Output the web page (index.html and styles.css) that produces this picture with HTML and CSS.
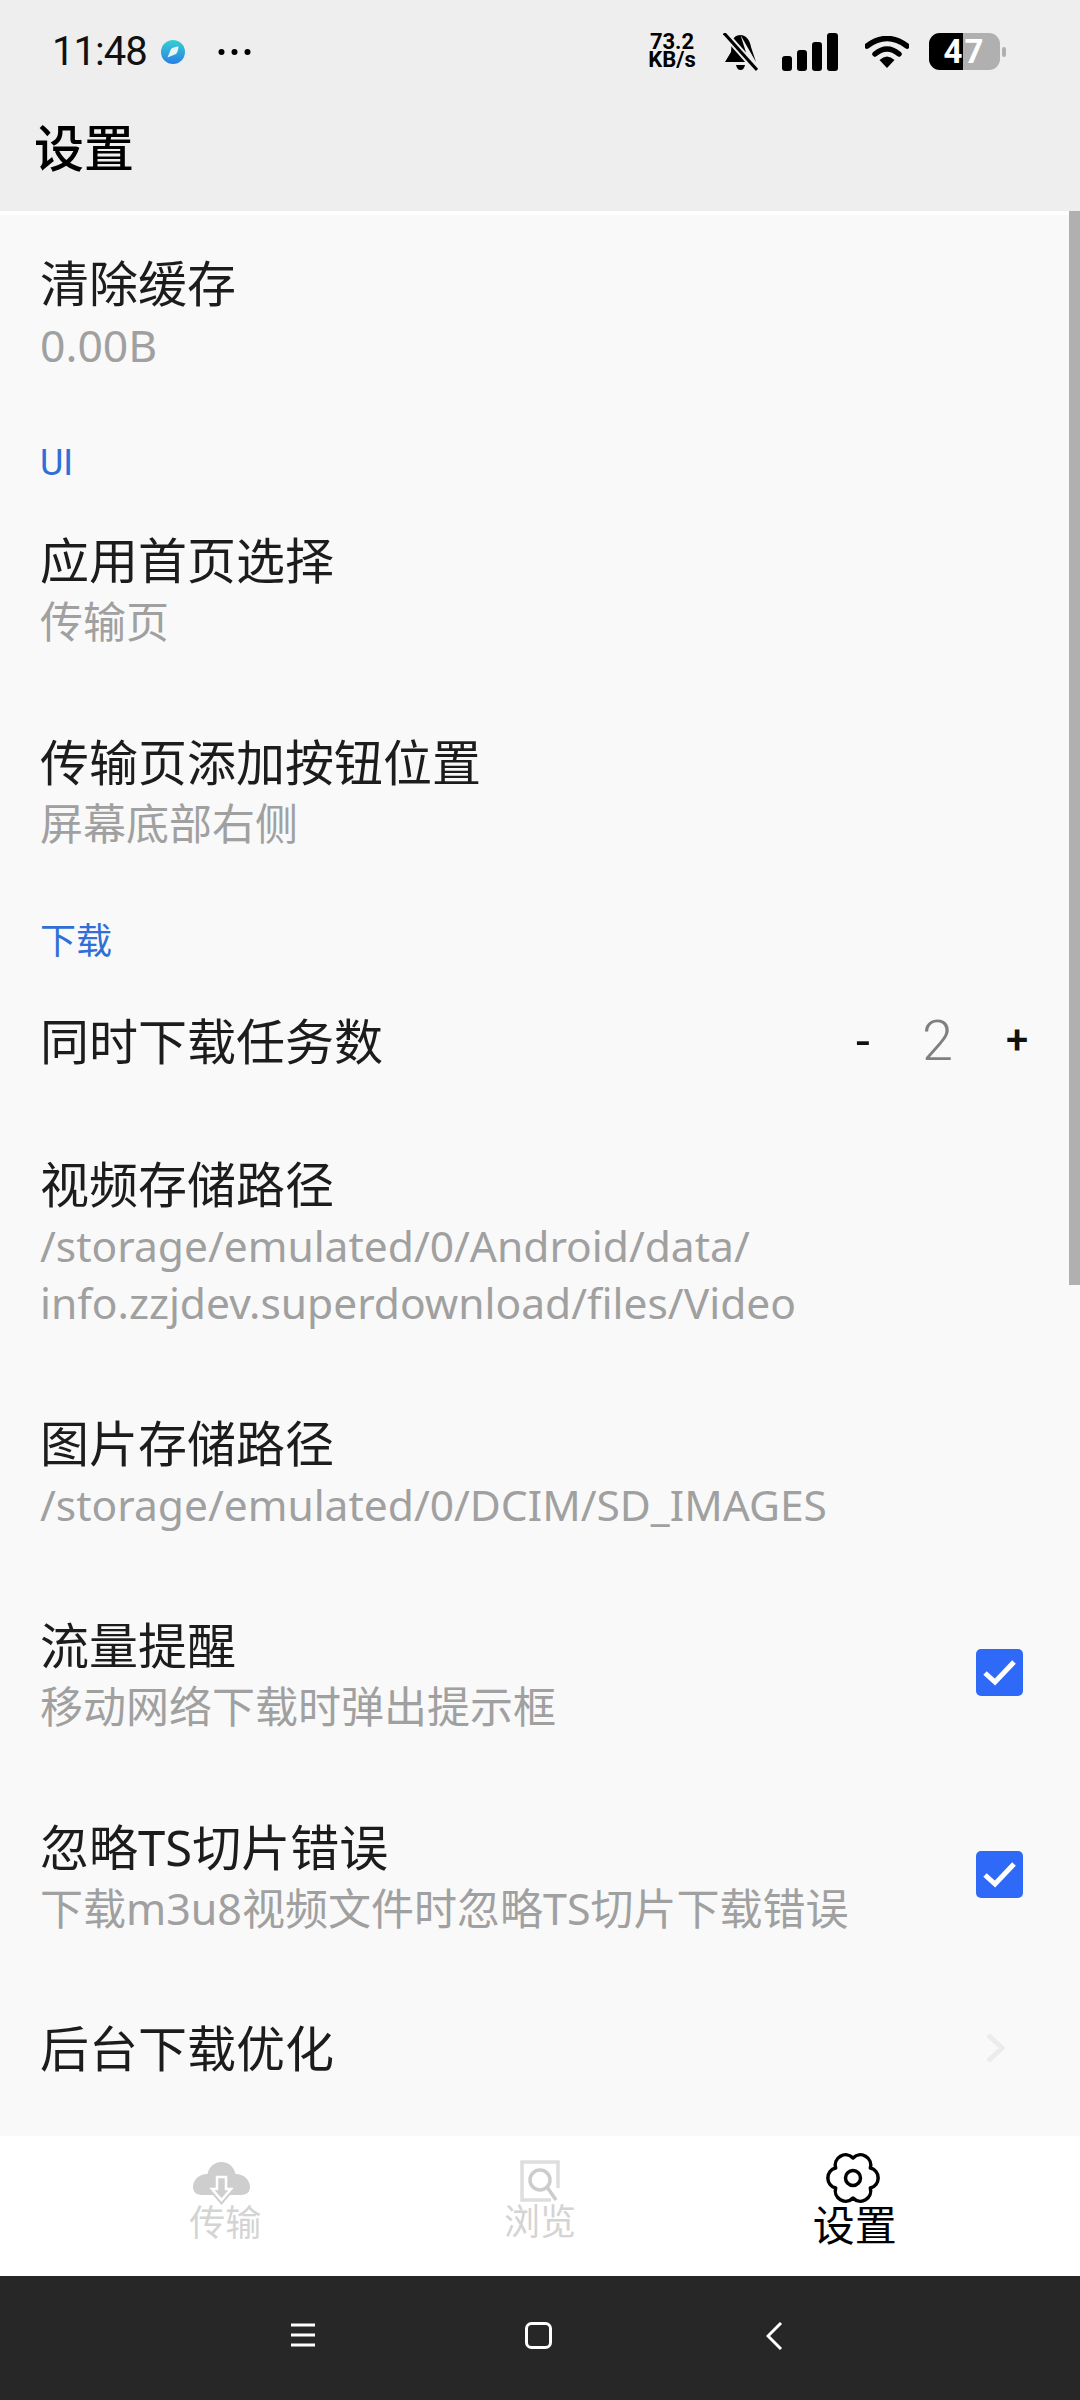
FILE: index.html
```html
<!DOCTYPE html>
<html lang="en">
<head>
  <meta charset="UTF-8" />
  <meta name="viewport" content="width=device-width, initial-scale=1.0" />
  <title>设置</title>
  <link rel="stylesheet" href="styles.css">
</head>
<body>
  <header class="top">
    <div class="status">
      <div class="status-left">
        <span class="time">11:48</span>
        <svg class="app-dot" viewBox="0 0 24 24">
          <defs>
            <linearGradient id="dotFill" x1="0" y1="0" x2="0" y2="1">
              <stop offset="0" stop-color="#35d0cf" />
              <stop offset="1" stop-color="#2a7fe6" />
            </linearGradient>
          </defs>
          <circle cx="12" cy="12" r="12" fill="url(#dotFill)" />
          <path d="M6.500 17.500 L10 9 Q12 7 17.500 6.500 Q17 12 15 14 Z" fill="#e4f6fb" />
        </svg>
        <svg class="more" viewBox="0 0 33 8">
          <circle cx="3.500" cy="4" r="3" />
          <circle cx="16.500" cy="4" r="3" />
          <circle cx="29.500" cy="4" r="3" />
        </svg>
      </div>
      <div class="status-right">
        <div class="speed">73.2<br>KB/s</div>
        <svg class="bell" viewBox="0 0 35 38">
          <path d="M17.500 2 C12 2 9 6 8.500 11 L8 19 L2 29 H26 Z M33 29 L28 14 C27 7 23 2 17.500 2 Z" />
          <path d="M13 32 H22 Q21 37 17.500 37 Q14 37 13 32 Z" />
          <path d="M2 1 L33 36" stroke="#eeeeee" stroke-width="7" />
          <path d="M1 0 L34 37" stroke="#000" stroke-width="3" />
        </svg>
        <div class="signal">
          <i class="bar bar-1"></i>
          <i class="bar bar-2"></i>
          <i class="bar bar-3"></i>
          <i class="bar bar-4"></i>
        </div>
        <svg class="wifi" viewBox="0 0 44 32">
          <path d="M2 10 Q22 -5 42 10" fill="none" stroke="#000" stroke-width="5.500" stroke-linecap="round" />
          <path d="M10 18 Q22 8 34 18" fill="none" stroke="#000" stroke-width="5.500" stroke-linecap="round" />
          <path d="M14.500 24 Q22 17 29.500 24 L22 32 Z" />
        </svg>
        <div class="battery">
          <div class="battery-body">
            <span class="battery-fill"></span>
            <span class="battery-text">47</span>
          </div>
          <span class="battery-nub"></span>
        </div>
      </div>
    </div>
    <h1 class="page-title">设置</h1>
  </header>

  <main class="list">
    <div class="scroll-thumb"></div>

    <div class="item">
      <div class="item-title">清除缓存</div>
      <div class="item-sub item-size">0.00B</div>
    </div>

    <div class="section">UI</div>

    <div class="item">
      <div class="item-title">应用首页选择</div>
      <div class="item-sub">传输页</div>
    </div>
    <div class="item">
      <div class="item-title">传输页添加按钮位置</div>
      <div class="item-sub">屏幕底部右侧</div>
    </div>

    <div class="section">下载</div>

    <div class="item item-row item-stepper">
      <div class="item-title">同时下载任务数</div>
      <div class="stepper">
        <span class="step-btn step-minus">-</span>
        <span class="step-value">2</span>
        <span class="step-btn">+</span>
      </div>
    </div>

    <div class="item">
      <div class="item-title">视频存储路径</div>
      <div class="item-sub item-path">/storage/emulated/0/Android/data/<br>info.zzjdev.superdownload/files/Video</div>
    </div>
    <div class="item">
      <div class="item-title">图片存储路径</div>
      <div class="item-sub item-path">/storage/emulated/0/DCIM/SD_IMAGES</div>
    </div>

    <div class="item item-row">
      <div>
        <div class="item-title">流量提醒</div>
        <div class="item-sub">移动网络下载时弹出提示框</div>
      </div>
      <span class="check">
        <svg viewBox="0 0 47 47"><path d="M9 24 L19 33 L38 13" /></svg>
      </span>
    </div>
    <div class="item item-row">
      <div>
        <div class="item-title">忽略TS切片错误</div>
        <div class="item-sub">下载m3u8视频文件时忽略TS切片下载错误</div>
      </div>
      <span class="check">
        <svg viewBox="0 0 47 47"><path d="M9 24 L19 33 L38 13" /></svg>
      </span>
    </div>

    <div class="item item-row item-link">
      <div class="item-title">后台下载优化</div>
      <svg class="chevron" viewBox="0 0 20 30"><path d="M3 2 L17 15 L3 28" /></svg>
    </div>
  </main>

  <nav class="tabs">
    <div class="tab">
      <svg class="tab-icon icon-cloud" viewBox="0 0 57 43">
        <path d="M28.500 0 C36 0 41 5 42.500 12 C52 12 57 19 57 25 C57 31 53 33 47 33 L37 33 L28.500 43 L20 33 L10 33 C4 33 0 31 0 25 C0 19 5 12 14.500 12 C16 5 21 0 28.500 0 Z" fill="#cecece" />
        <path d="M24 15 H33 V27 H38 L28.500 38 L19 27 H24 Z" fill="none" stroke="#ffffff" stroke-width="2.500" />
      </svg>
      <span class="tab-label">传输</span>
    </div>
    <div class="tab">
      <svg class="tab-icon icon-browse" viewBox="0 0 40 42">
        <path d="M31 40 H2 V2 H38 V28" fill="none" stroke="#dedede" stroke-width="3.500" />
        <circle cx="20" cy="20" r="10" fill="none" stroke="#cccccc" stroke-width="3.500" />
        <path d="M27 27 L36 40" stroke="#cccccc" stroke-width="3.500" />
      </svg>
      <span class="tab-label">浏览</span>
    </div>
    <div class="tab tab-active">
      <svg class="tab-icon icon-gear" viewBox="0 0 54 50">
        <path d="M44.320 35 A10.300 10.300 0 0 0 44.320 15 A10.300 10.300 0 0 0 27 5 A10.300 10.300 0 0 0 9.680 15 A10.300 10.300 0 0 0 9.680 35 A10.300 10.300 0 0 0 27 45 A10.300 10.300 0 0 0 44.320 35 Z" fill="none" stroke="#000" stroke-width="3.500" stroke-linejoin="round" />
        <circle cx="27" cy="25" r="7.500" fill="none" stroke="#000" stroke-width="3.500" />
      </svg>
      <span class="tab-label">设置</span>
    </div>
  </nav>

  <footer class="sysbar">
    <svg class="sys-menu" viewBox="0 0 30 26"><path d="M3 3 H27 M3 13 H27 M3 23 H27" /></svg>
    <svg class="sys-home" viewBox="0 0 27 27"><rect x="1.500" y="1.500" width="24" height="24" rx="5" /></svg>
    <svg class="sys-back" viewBox="0 0 17 28"><path d="M15 1 L2 14 L15 27" /></svg>
  </footer>
</body>
</html>
```

FILE: styles.css
```css
/* Base */
* {
  box-sizing: border-box;
}

html, body {
  margin: 0;
  padding: 0;
}

body {
  width: 1080px;
  height: 2400px;
  display: flex;
  flex-direction: column;
  overflow: hidden;
  background-color: #f9f9f9;
  font-family: "Noto Sans", "Noto Sans CJK SC", sans-serif;
  color: #1c1c1c;
}

/* Status bar + page title */
.top {
  height: 211px;
  flex-shrink: 0;
  background-color: #eeeeee;
}

.status {
  height: 113px;
  padding: 33px 74px 0 52px;
  display: flex;
  justify-content: space-between;
  align-items: flex-start;
}

.status-left {
  display: flex;
  align-items: center;
  height: 38px;
}

.time {
  font-family: "Roboto", sans-serif;
  font-size: 40px;
  line-height: 38px;
  letter-spacing: -1px;
  color: #111;
}

.app-dot {
  width: 24px;
  height: 24px;
  margin-left: 14px;
}

.more {
  width: 33px;
  height: 8px;
  margin-left: 33px;
}

.status-right {
  display: flex;
  align-items: flex-start;
}

.speed {
  width: 50px;
  font-family: "Roboto", sans-serif;
  font-size: 22px;
  font-weight: 700;
  line-height: 18px;
  color: #000;
  text-align: center;
}

.bell {
  width: 35px;
  height: 38px;
  margin-left: 26px;
}

.signal {
  display: flex;
  align-items: flex-end;
  gap: 5px;
  height: 38px;
  margin-left: 24px;
}

.bar {
  width: 10px;
  border-radius: 3px;
  background-color: #000;
}

.bar-1 { height: 15px; }
.bar-2 { height: 21px; }
.bar-3 { height: 29px; }
.bar-4 { height: 38px; width: 11px; }

.wifi {
  width: 44px;
  height: 32px;
  margin: 3px 0 0 27px;
}

.battery {
  display: flex;
  align-items: center;
  margin-left: 20px;
}

.battery-body {
  width: 71px;
  height: 37px;
  border-radius: 11px;
  background-color: #b0b0b0;
  position: relative;
  overflow: hidden;
}

.battery-fill {
  position: absolute;
  left: 0;
  top: 0;
  bottom: 0;
  width: 34px;
  background-color: #000;
}

.battery-text {
  position: absolute;
  left: 0;
  right: 0;
  top: 0;
  font-family: "Roboto", sans-serif;
  font-size: 33px;
  font-weight: 700;
  line-height: 37px;
  letter-spacing: 2px;
  color: #fff;
  text-align: center;
}

.battery-nub {
  width: 4px;
  height: 10px;
  margin-left: 2px;
  border-radius: 2px;
  background-color: #b0b0b0;
}

.page-title {
  margin: 0;
  padding-left: 34px;
  font-size: 50px;
  font-weight: 500;
  line-height: 70px;
  color: #000;
}

/* Settings list */
.list {
  flex: 1;
  position: relative;
  overflow: hidden;
  padding-top: 4px;
}

.list::before {
  content: "";
  position: absolute;
  left: 0;
  right: 0;
  top: 0;
  height: 4px;
  background-color: #ffffff;
}

.scroll-thumb {
  position: absolute;
  top: 0;
  right: 0;
  width: 11px;
  height: 1074px;
  background-color: #b0b0b0;
}

.section {
  height: 75px;
  padding: 28px 40px 0;
  font-family: "Roboto", "Noto Sans CJK SC", sans-serif;
  font-size: 36px;
  line-height: 36px;
  color: #2f6fd6;
}

.item {
  padding: 35px 40px 44px;
}

.item-row {
  display: flex;
  align-items: center;
  justify-content: space-between;
  padding-right: 57px;
}

.item-title {
  font-size: 49px;
  line-height: 66px;
  color: #1c1c1c;
}

.item-sub {
  font-size: 43px;
  line-height: 57px;
  color: #a0a0a0;
}

.item-path {
  font-size: 42.500px;
}

.item-size {
  font-size: 44.500px;
}

.item-stepper {
  height: 145px;
  padding-top: 0;
  padding-bottom: 6px;
  padding-right: 50px;
}

.stepper {
  display: flex;
  align-items: center;
  font-family: "Roboto", sans-serif;
  color: #111;
}

.step-btn {
  width: 26px;
  font-size: 40px;
  font-weight: 500;
  text-align: center;
}

.step-minus {
  font-size: 50px;
  font-weight: 400;
}

.step-value {
  width: 28px;
  margin: 0 54px 0 46px;
  font-size: 56px;
  font-weight: 300;
  color: #808080;
  text-align: center;
}

.check {
  width: 47px;
  height: 47px;
  margin-bottom: 2px;
  border-radius: 5px;
  background-color: #2f69f8;
  display: block;
}

.check svg {
  display: block;
  width: 47px;
  height: 47px;
  fill: none;
  stroke: #ffffff;
  stroke-width: 5;
}

.item-link {
  padding-top: 34px;
  padding-bottom: 39px;
  padding-right: 75px;
}

.chevron {
  width: 20px;
  height: 30px;
  fill: none;
  stroke: #ececec;
  stroke-width: 5;
}

/* Bottom tabs */
.tabs {
  height: 140px;
  flex-shrink: 0;
  padding: 0 68px;
  display: grid;
  grid-template-columns: repeat(3, 1fr);
  background-color: #ffffff;
}

.tab {
  display: flex;
  flex-direction: column;
  align-items: center;
  justify-content: flex-start;
  padding-top: 24px;
}

.tab-icon {
  display: block;
  overflow: visible;
}

.icon-cloud {
  width: 57px;
  height: 43px;
  margin: 2px 0 -2px -8px;
}

.icon-browse {
  width: 40px;
  height: 42px;
}

.icon-gear {
  width: 54px;
  height: 50px;
  margin: -7px 0 0 -4px;
}

.tab-label {
  font-size: 36px;
  line-height: 40px;
  color: #d4d4d4;
}

.tab-active .tab-label {
  font-size: 42px;
  line-height: 44px;
  color: #000;
}

/* System navigation */
.sysbar {
  height: 124px;
  flex-shrink: 0;
  padding: 46px 0 0 288px;
  background-color: #272727;
  display: flex;
  align-items: flex-start;
  gap: 207px;
}

.sysbar svg {
  fill: none;
  stroke: #ffffff;
  stroke-width: 3;
}

.sys-menu {
  width: 30px;
  height: 26px;
}

.sys-home {
  width: 27px;
  height: 27px;
}

.sys-back {
  width: 17px;
  height: 28px;
  margin-left: 7px;
}
```
